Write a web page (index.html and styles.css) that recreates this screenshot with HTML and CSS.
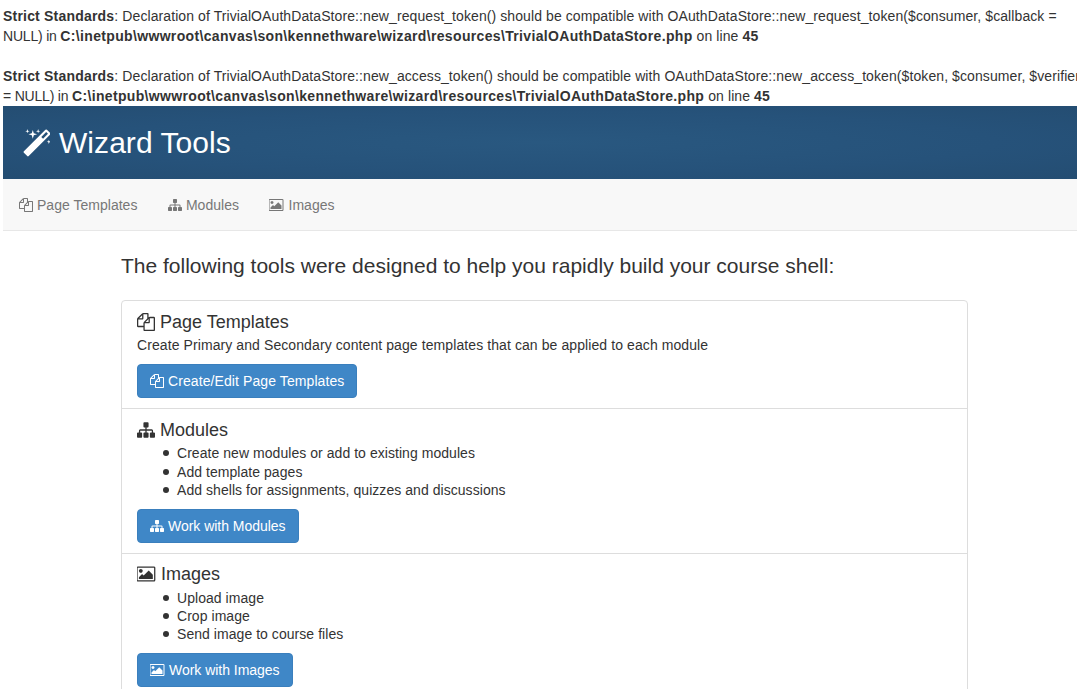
FILE: index.html
```html
<!DOCTYPE html>
<html>
<head>
	<title>Wizard Tools</title>
	<link rel="stylesheet" href="styles.css">
</head>
<body>
<svg class="defs" width="0" height="0">
  <symbol id="i-files" viewBox="0 0 1792 1792">
    <path fill="currentColor" d="M1696 384q40 0 68 28t28 68v1216q0 40-28 68t-68 28h-960q-40 0-68-28t-28-68v-288h-544q-40 0-68-28t-28-68v-672q0-40 20-88t48-76l408-408q28-28 76-48t88-20h416q40 0 68 28t28 68v328q68-40 128-40h416zm-544 213l-299 299h299v-299zm-640-384l-299 299h299v-299zm194 647l316-316v-416h-384v416q0 40-28 68t-68 28h-416v640h512v-256q0-40 20-88t48-76zm956 804v-1152h-384v416q0 40-28 68t-68 28h-416v640h896z"/>
  </symbol>
  <symbol id="i-sitemap" viewBox="0 0 1792 1792">
    <path fill="currentColor" d="M1792 1248v320q0 40-28 68t-68 28h-320q-40 0-68-28t-28-68v-320q0-40 28-68t68-28h96v-192h-512v192h96q40 0 68 28t28 68v320q0 40-28 68t-68 28h-320q-40 0-68-28t-28-68v-320q0-40 28-68t68-28h96v-192h-512v192h96q40 0 68 28t28 68v320q0 40-28 68t-68 28h-320q-40 0-68-28t-28-68v-320q0-40 28-68t68-28h96v-192q0-52 38-90t90-38h512v-192h-96q-40 0-68-28t-28-68v-320q0-40 28-68t68-28h320q40 0 68 28t28 68v320q0 40-28 68t-68 28h-96v192h512q52 0 90 38t38 90v192h96q40 0 68 28t28 68z"/>
  </symbol>
  <symbol id="i-image" viewBox="0 0 1920 1792">
    <path fill="currentColor" d="M576 576q0 80-56 136t-136 56-136-56-56-136 56-136 136-56 136 56 56 136zm1024 384v448h-1408v-192l320-320 160 160 512-512zm96-704h-1600q-13 0-22.500 9.500t-9.500 22.500v1216q0 13 9.500 22.500t22.500 9.500h1600q13 0 22.500-9.500t9.500-22.500v-1216q0-13-9.500-22.500t-22.500-9.500zm160 32v1216q0 66-47 113t-113 47h-1600q-66 0-113-47t-47-113v-1216q0-66 47-113t113-47h1600q66 0 113 47t47 113z"/>
  </symbol>
  <symbol id="i-magic" viewBox="0 0 1664 1792">
    <path fill="currentColor" d="M1254 581l293-293-107-107-293 293zm447-293q0 27-18 45l-1286 1286q-18 18-45 18t-45-18l-198-198q-18-18-18-45t18-45l1286-1286q18-18 45-18t45 18l198 198q18 18 18 45zm-1351-190l98 30-98 30-30 98-30-98-98-30 98-30 30-98zm350 162l196 60-196 60-60 196-60-196-196-60 196-60 60-196zm930 478l98 30-98 30-30 98-30-98-98-30 98-30 30-98zm-640-640l98 30-98 30-30 98-30-98-98-30 98-30 30-98z"/>
  </symbol>
</svg>

<div class="errors">
  <b>Strict Standards</b>: Declaration of TrivialOAuthDataStore::new_request_token() should be compatible with OAuthDataStore::new_request_token($consumer, $callback =<br>
  <span class="lead">NULL) in </span><b class="path">C:\inetpub\wwwroot\canvas\son\kennethware\wizard\resources\TrivialOAuthDataStore.php</b> on line <b>45</b><br>
  <br>
  <b>Strict Standards</b>: Declaration of TrivialOAuthDataStore::new_access_token() should be compatible with OAuthDataStore::new_access_token($token, $consumer, $verifier<br>
  <span class="lead">= NULL) in </span><b class="path">C:\inetpub\wwwroot\canvas\son\kennethware\wizard\resources\TrivialOAuthDataStore.php</b> on line <b>45</b>
</div>

<div class="wrap">
  <div class="banner">
    <svg class="banner-icon"><use href="#i-magic"/></svg>
    <h1>Wizard Tools</h1>
  </div>
  <div class="nav">
    <a><svg class="ico"><use href="#i-files"/></svg>Page Templates</a>
    <a><svg class="ico"><use href="#i-sitemap"/></svg>Modules</a>
    <a><svg class="ico wide"><use href="#i-image"/></svg>Images</a>
  </div>
  <div class="content">
    <h2>The following tools were designed to help you rapidly build your course shell:</h2>
    <div class="card">
      <div class="item">
        <h3><svg class="ico-lg"><use href="#i-files"/></svg>Page Templates</h3>
        <p>Create Primary and Secondary content page templates that can be applied to each module</p>
        <a class="btn"><svg class="ico"><use href="#i-files"/></svg>Create/Edit Page Templates</a>
      </div>
      <div class="item">
        <h3><svg class="ico-lg"><use href="#i-sitemap"/></svg>Modules</h3>
        <ul>
          <li>Create new modules or add to existing modules</li>
          <li>Add template pages</li>
          <li>Add shells for assignments, quizzes and discussions</li>
        </ul>
        <a class="btn"><svg class="ico"><use href="#i-sitemap"/></svg>Work with Modules</a>
      </div>
      <div class="item">
        <h3><svg class="ico-lg wide"><use href="#i-image"/></svg>Images</h3>
        <ul>
          <li>Upload image</li>
          <li>Crop image</li>
          <li>Send image to course files</li>
        </ul>
        <a class="btn"><svg class="ico wide"><use href="#i-image"/></svg>Work with Images</a>
      </div>
    </div>
  </div>
</div>
</body>
</html>
```
FILE: styles.css
```css
html,body{margin:0;padding:0;height:689px;overflow:hidden;}
body{
  background:#fff;
  color:#333;
  font-family:"Liberation Sans",Arial,sans-serif;
  font-size:14px;
  line-height:20px;
  letter-spacing:.09px;
}
.defs{display:block;height:0;}
.errors{
  padding:6px 0 0 3px;
  white-space:nowrap;
}
.errors b{letter-spacing:.2px;}
.errors b.path{letter-spacing:.34px;}
.lead{letter-spacing:-.2px;}
.wrap{margin-left:3px;}
.banner{
  display:flex;
  align-items:center;
  height:73px;
  padding-left:19px;
  box-sizing:border-box;
  color:#fff;
  background:radial-gradient(ellipse at center,#295880 0%,#26527a 60%,#244d72 100%);
}
.banner-icon{width:28px;height:30px;margin:2px 9px 0 0;}
h1{margin:0;font-size:30px;font-weight:400;line-height:33px;letter-spacing:.05px;}
.nav{
  display:flex;
  gap:30.500px;
  height:52px;
  padding-left:16px;
  align-items:center;
  box-sizing:border-box;
  background:#f8f8f8;
  border-bottom:1px solid #e7e7e7;
  color:#777;
  letter-spacing:.02px;
}
.ico{width:14px;height:14px;margin-right:4px;vertical-align:-2px;}
.ico.wide{width:15px;}
.content{margin:0 109px 0 118px;}
h2{
  margin:0;
  padding:24px 0 23px;
  font-size:21px;
  font-weight:400;
  line-height:22px;
  letter-spacing:0;
}
.card{
  border:1px solid #ddd;
  border-radius:4px;
}
.item{
  padding:10px 15px;
  border-bottom:1px solid #ddd;
}
h3{margin:0;font-size:18px;font-weight:400;line-height:22px;letter-spacing:0;}
.ico-lg{width:18px;height:18px;margin-right:5px;vertical-align:-3px;}
.ico-lg.wide{width:19px;}
p{margin:2px 0 9px;}
ul{margin:3.200px 0 9.800px;padding-left:40px;list-style:none;line-height:18.400px;letter-spacing:.05px;}
.item:last-child h3{margin-top:-1px;}
.item:last-child ul{margin-top:4px;line-height:18px;}
li{display:flex;align-items:center;}
li::before{
  content:"";
  width:6px;
  height:6px;
  margin:0 8px 0 -14px;
  border-radius:50%;
  background:#333;
}
.btn{
  display:inline-block;
  padding:6px 12px;
  color:#fff;
  background:#3f87c7;
  border:1px solid #3a7fbd;
  border-radius:4px;
}
ul + .btn{letter-spacing:-.03px;}
```
